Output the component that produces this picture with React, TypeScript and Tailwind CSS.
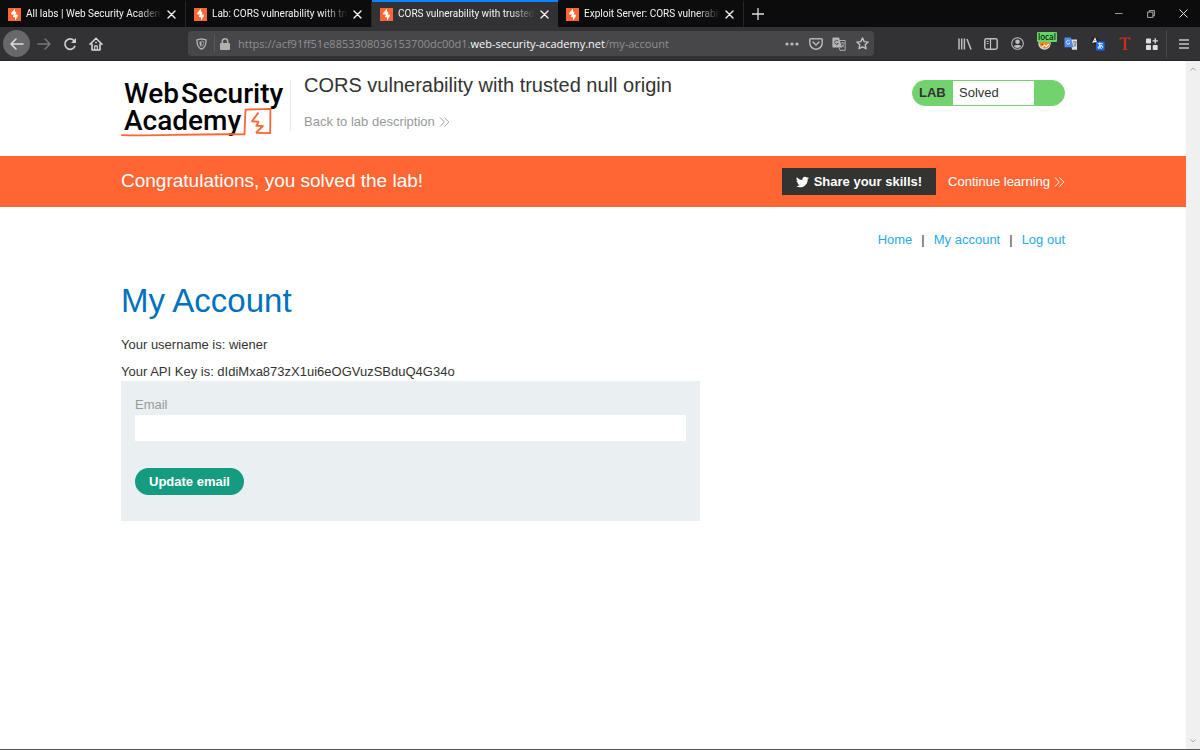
import { ReactNode } from "react";

const tabs = [
  { title: "All labs | Web Security Academy", active: false },
  { title: "Lab: CORS vulnerability with tru", active: false },
  { title: "CORS vulnerability with trusted", active: true },
  { title: "Exploit Server: CORS vulnerabili", active: false },
];

function BurpIcon() {
  return (
    <svg className="w-[13px] h-[13px] shrink-0" viewBox="0 0 13 13" aria-hidden="true">
      <rect width="13" height="13" fill="#ff6633" />
      <path
        d="M7 0.4L3 5.2L3.4 6.6H6L5 8.2L5.4 9.2H7V12.6L10 8L9.6 6.6H7.4L8.4 4.8L8 3.8H7Z"
        fill="#fff"
      />
    </svg>
  );
}

function CloseIcon() {
  return (
    <svg className="w-[9px] h-[9px]" viewBox="0 0 9 9" stroke="#f4f4f4" strokeWidth="1.4" strokeLinecap="round">
      <path d="M1 1l7 7M8 1L1 8" />
    </svg>
  );
}

function BrowserTab({ title, active }: { title: string; active: boolean }) {
  return (
    <div
      className={`flex w-[186px] min-w-0 items-center border-t-2 pl-2 pr-2 ${
        active ? "border-[#0a84ff] bg-[#323234]" : "border-[#0c0c0d] border-r border-r-[#252526]"
      }`}
    >
      <BurpIcon />
      <span className="ml-[5px] min-w-0 flex-1 overflow-hidden whitespace-nowrap pb-px text-[10px] leading-4 text-[#f5f5f5] [mask-image:linear-gradient(to_right,black_82%,transparent)]">
        {title}
      </span>
      <button aria-label={`Close ${title}`} className="ml-1 p-px">
        <CloseIcon />
      </button>
    </div>
  );
}

function ToolButton({ label, children }: { label: string; children: ReactNode }) {
  return (
    <button aria-label={label} className="flex h-[26px] w-[26px] shrink-0 items-center justify-center">
      {children}
    </button>
  );
}

function DoubleChevron() {
  return (
    <svg className="h-[10px] w-[11px]" viewBox="0 0 11 10" fill="none" stroke="currentColor" strokeWidth="0.9">
      <path d="M1 0.5L5.3 5L1 9.5M5.5 0.5L9.8 5L5.5 9.5" />
    </svg>
  );
}

function TabStrip() {
  return (
    <div className="flex h-[27px] bg-[#0c0c0d] font-['Roboto',sans-serif]">
      {tabs.map((tab) => (
        <BrowserTab key={tab.title} {...tab} />
      ))}
      <button aria-label="New tab" className="flex w-[27px] items-center justify-center">
        <svg className="h-3 w-3" viewBox="0 0 12 12" stroke="#dcdcdc" strokeWidth="1.3">
          <path d="M6 0v12M0 6h12" />
        </svg>
      </button>
      <div className="ml-auto flex">
        <button aria-label="Minimize" className="flex w-8 items-center justify-center">
          <svg className="h-2 w-2" viewBox="0 0 8 8" stroke="#999" strokeWidth="1">
            <path d="M0 3.5h7.5" />
          </svg>
        </button>
        <button aria-label="Restore" className="flex w-8 items-center justify-center">
          <svg className="h-2 w-2" viewBox="0 0 8 8" fill="none" stroke="#bbb" strokeWidth="0.9">
            <path d="M0.6 2.1h5.3v5.3H0.6zM2.2 2V0.6h5.2v5.2H6" />
          </svg>
        </button>
        <button aria-label="Close window" className="flex w-[33px] items-center justify-center">
          <svg className="h-[9px] w-[9px]" viewBox="0 0 9 9" stroke="#e5e5e5" strokeWidth="1">
            <path d="M0.5 0.5l8 8M8.5 0.5l-8 8" />
          </svg>
        </button>
      </div>
    </div>
  );
}

function Toolbar() {
  return (
    <div className="flex h-[34px] items-center border-b border-[#252526] bg-[#323234] pl-[3px] pr-[3px]">
      <button
        aria-label="Back"
        className="mr-px flex h-[27px] w-[27px] shrink-0 items-center justify-center rounded-full bg-[#68686a]"
      >
        <svg className="h-[14px] w-[14px]" viewBox="0 0 14 14" fill="none" stroke="#dedede" strokeWidth="1.5" strokeLinecap="round" strokeLinejoin="round">
          <path d="M13 7H1M6 2L1 7l5 5" />
        </svg>
      </button>
      <ToolButton label="Forward">
        <svg className="h-[14px] w-[14px]" viewBox="0 0 14 14" fill="none" stroke="#78787a" strokeWidth="1.4" strokeLinecap="round" strokeLinejoin="round">
          <path d="M1 7h12M8 2l5 5-5 5" />
        </svg>
      </ToolButton>
      <ToolButton label="Reload">
        <svg className="h-[14px] w-[14px]" viewBox="0 0 14 14" fill="none" stroke="#cfcfcf" strokeWidth="1.7" strokeLinecap="round">
          <path d="M11.8 9.4A5.2 5.2 0 1 1 10.8 3.4" />
          <path d="M13 1v5H8z" fill="#cfcfcf" stroke="none" />
        </svg>
      </ToolButton>
      <ToolButton label="Home">
        <svg className="h-[14px] w-[14px]" viewBox="0 0 14 14" fill="none" stroke="#d5d5d5" strokeWidth="1.6" strokeLinecap="round" strokeLinejoin="round">
          <path d="M1 7.2L7 1.2l6 6M3 7v6h8V7" />
          <path d="M5.7 13V8.8h2.6V13" strokeWidth="1.2" />
          <path d="M7 5.2v0.6" />
        </svg>
      </ToolButton>

      <div className="ml-[79px] flex h-[25px] min-w-0 flex-1 items-center rounded-sm bg-[#474749]">
        <ToolButton label="Tracking protection">
          <svg className="h-3 w-[11px]" viewBox="0 0 11 12" fill="none" stroke="#b5b5b6" strokeWidth="1.3">
            <path d="M5.5 0.8L10 1.8C10.2 6 9.3 9.6 5.5 11.2C1.7 9.6 0.8 6 1 1.8Z" strokeLinejoin="round" />
            <path d="M5.5 3.2V8.8C3.8 7.9 3.4 6 3.4 3.7Z" fill="#b5b5b6" stroke="none" />
            <path d="M5.5 3.2L7.6 3.7C7.6 6 7.2 7.9 5.5 8.8" strokeWidth="0.7" />
          </svg>
        </ToolButton>
        <div className="h-[17px] w-px shrink-0 bg-[#59595b]" />
        <svg className="ml-[5px] h-3 w-[10px] shrink-0" viewBox="0 0 10 12" fill="none" aria-hidden="true">
          <rect y="5" width="10" height="7" rx="1" fill="#b0b0b1" />
          <path d="M2.3 6V3.5a2.7 2.7 0 0 1 5.4 0V6" stroke="#b0b0b1" strokeWidth="1.6" />
        </svg>
        <div className="ml-2 min-w-0 flex-1 truncate pt-0.5 text-[11px] text-[#8f8f91]">
          https://acf91ff51e8853308036153700dc00d1.
          <span className="text-[#f9f9fa]">web-security-academy.net</span>
          /my-account
        </div>
        <div className="flex shrink-0">
          <button aria-label="Page actions" className="flex h-[26px] w-6 items-center justify-center">
            <svg className="h-1 w-[14px]" viewBox="0 0 14 4" fill="#bdbdbe">
              <circle cx="2" cy="2" r="1.6" />
              <circle cx="7" cy="2" r="1.6" />
              <circle cx="12" cy="2" r="1.6" />
            </svg>
          </button>
          <button aria-label="Save to Pocket" className="flex h-[26px] w-[23px] items-center justify-center">
            <svg className="h-3 w-[14px]" viewBox="0 0 14 12" fill="none" stroke="#b5b5b6" strokeWidth="1.5" strokeLinecap="round" strokeLinejoin="round">
              <path d="M1.8 0.8h10.4a1 1 0 0 1 1 1V5A6.2 6.2 0 0 1 0.8 5V1.8a1 1 0 0 1 1-1z" />
              <path d="M4 4l3 3 3-3" />
            </svg>
          </button>
          <button aria-label="Translate page" className="flex h-[26px] w-[23px] items-center justify-center">
            <svg className="h-[14px] w-[14px]" viewBox="0 0 14 14" fill="none">
              <path d="M1.2 0.5H7L10 10.5H1.2a0.8 0.8 0 0 1-0.8-0.8V1.2a0.8 0.8 0 0 1 0.8-0.7z" fill="#b5b5b6" />
              <path d="M6.3 4.2A2 2 0 1 0 6.3 6.5H4.8" stroke="#474749" strokeWidth="0.9" />
              <path d="M8 3.5h5.2v9.8H8L7 10.5" stroke="#b5b5b6" strokeWidth="0.9" />
              <path d="M9 6h3.6M10.8 5v1M12 6.5c-.5 2-1.2 3-2.4 4M9.6 7.5l2.4 3" stroke="#b5b5b6" strokeWidth="0.8" />
            </svg>
          </button>
          <button aria-label="Bookmark this page" className="flex h-[26px] w-6 items-center justify-center">
            <svg className="h-[13px] w-[13px]" viewBox="0 0 13 13" fill="none" stroke="#c2c2c3" strokeWidth="1.4" strokeLinejoin="round">
              <path d="M6.5 1l1.7 3.6 3.9.5-2.9 2.7.8 3.9-3.5-1.9L3 11.7l.8-3.9L.9 5.1l3.9-.5z" />
            </svg>
          </button>
        </div>
      </div>

      <div className="ml-[78px] flex shrink-0 items-center">
        <ToolButton label="Library">
          <svg className="h-3 w-[14px]" viewBox="0 0 14 12" stroke="#bdbdbe" strokeWidth="1.5">
            <path d="M1 0.5v11M3.7 0.5v11M6.4 0.5v11M9 1l4 10.5" />
          </svg>
        </ToolButton>
        <ToolButton label="Sidebars">
          <svg className="h-3 w-[14px]" viewBox="0 0 14 12" fill="none" stroke="#bdbdbe">
            <rect x="0.8" y="0.8" width="12.4" height="10.4" rx="1.6" strokeWidth="1.5" />
            <path d="M6.5 1v10" strokeWidth="1.2" />
            <path d="M2.6 3.5h2M2.6 5.5h2" strokeWidth="0.9" />
          </svg>
        </ToolButton>
        <ToolButton label="Account">
          <svg className="h-[13px] w-[13px]" viewBox="0 0 13 13" fill="#bdbdbe">
            <circle cx="6.5" cy="6.5" r="5.8" fill="none" stroke="#bdbdbe" strokeWidth="1.1" />
            <circle cx="6.5" cy="4.8" r="2.3" />
            <path d="M2.7 9.2C3.4 7.5 9.6 7.5 10.3 9.2A5 5 0 0 1 2.7 9.2z" />
          </svg>
        </ToolButton>
        <div className="ml-px flex gap-px">
          <div className="relative">
            <ToolButton label="Proxy: local">
              <svg className="h-[13px] w-[13px]" viewBox="0 0 13 13">
                <circle cx="6.5" cy="6.5" r="6.2" fill="#d9d4cd" />
                <path d="M1.2 5.5C1.5 1.5 11.5 1.5 12 5.5C12.2 9 9.5 11.6 7.5 11.2C6 12 2 10.5 1.2 5.5z" fill="#ed8a25" />
                <path d="M4 10.4L6.2 8l2 1.6L10.8 7" stroke="#fff" strokeWidth="1.1" fill="none" />
                <path d="M3.5 7l1.8 1" stroke="#7b3b12" strokeWidth="1" />
              </svg>
            </ToolButton>
            <span className="pointer-events-none absolute left-[6px] top-px rounded-[1px] bg-[#63d668] px-px font-['Open_Sans',sans-serif] text-[8px] font-semibold leading-[10px] text-[#0b2a0c]">
              local
            </span>
          </div>
          <ToolButton label="Google Translate">
            <svg className="h-[13px] w-[14px]" viewBox="0 0 14 13" fill="none">
              <path d="M6.5 2.5H13v10.2H8z" fill="#dededf" />
              <path d="M0.5 0.5h6.3l2.8 9.8H0.5z" fill="#4f8bf0" />
              <path d="M5.8 4.2A1.9 1.9 0 1 0 5.9 6.2H4.5" stroke="#dce8ff" strokeWidth="0.9" />
              <path d="M9 5h3.6M10.8 4v1M12 5.5c-.3 1.8-1 3-2 4M10 6.5l2 3" stroke="#666" strokeWidth="0.8" />
            </svg>
          </ToolButton>
          <ToolButton label="Translate selection">
            <svg className="h-[14px] w-[14px]" viewBox="0 0 14 14" fill="none">
              <path d="M0.5 0.5h6l3 7h-9z" fill="#242426" />
              <path d="M1.7 6L4 1.5 5.8 6M2.4 4.6h2.8" stroke="#f5f5f5" strokeWidth="1.1" />
              <rect x="5" y="4.5" width="8.6" height="9" rx="1" fill="#1769e0" />
              <path d="M6.8 6.7h4.8M8.8 5.4c-.3 2.5 0 4.5.5 6M11 7.6c-.5 2-2 3.7-3.6 3.7-1-1 .7-3 3-2.7 2 .3 1.6 2.7-.2 3" stroke="#fff" strokeWidth="0.9" />
            </svg>
          </ToolButton>
          <ToolButton label="Text tool">
            <svg className="h-[13px] w-3" viewBox="0 0 12 13" fill="#c9301a">
              <path d="M0.8 0.4h10.4l0.4 3h-0.7C10.3 1.7 9.3 1.3 7.2 1.3v10.2c0 .6.4.8 1.4.9v.5H3.4v-.5c1-.1 1.4-.3 1.4-.9V1.3c-2.1 0-3.1.4-3.7 2.1H0.4z" />
            </svg>
          </ToolButton>
          <ToolButton label="Add-ons">
            <svg className="h-3 w-3" viewBox="0 0 12 12" fill="#dedede">
              <rect y="0.5" width="5" height="5" rx="0.8" />
              <rect y="7" width="5" height="5" rx="0.8" />
              <rect x="6.7" y="7" width="5" height="5" rx="0.8" />
              <path d="M8.6 0.3h1.3v2h2v1.3h-2v2H8.6v-2h-2V2.3h2z" />
            </svg>
          </ToolButton>
        </div>
        <div className="mr-1 ml-px h-7 w-px bg-[#48484a]" />
        <ToolButton label="Menu">
          <svg className="h-[10px] w-[10px]" viewBox="0 0 10 10" stroke="#c4c4c5" strokeWidth="1.4">
            <path d="M0 1h10M0 5h10M0 9h10" />
          </svg>
        </ToolButton>
      </div>
    </div>
  );
}

function AcademyLogo() {
  return (
    <svg className="h-[62px] w-[166px] shrink-0" viewBox="0 0 166 62" role="img" aria-label="Web Security Academy">
      <g className="font-['Roboto',sans-serif] text-[28px] font-medium" fill="#000">
        <text x="3" y="28">Web</text>
        <text x="60" y="28">Security</text>
        <text x="3" y="55">Academy</text>
      </g>
      <g fill="none" stroke="#ff6633" strokeLinecap="round" strokeLinejoin="round">
        <path d="M1 60.2C30 61.2 75 58.6 123.5 59.4L124.5 34.6L149.4 33.8L149.2 58.2L136 57.8" strokeWidth="1.8" />
        <path d="M137 38.3L131 46.2L137.4 46.8L135.4 50.8L141.8 51L135.5 57.4" strokeWidth="1.9" />
      </g>
    </svg>
  );
}

function LabHeader() {
  return (
    <header className="mx-auto flex h-[95px] w-full max-w-[944px] items-start pt-[14px]">
      <a href="#academy">
        <AcademyLogo />
      </a>
      <div className="ml-[3px] mt-[5px] h-[51px] border-l border-[#e8e8e8] pl-[13px]">
        <h2 className="-mt-[7px] text-[20px] leading-6 text-[#333332]">
          CORS vulnerability with trusted null origin
        </h2>
        <a href="#description" className="mt-[17px] flex items-center gap-1 text-[13px] leading-4 text-[#999]">
          Back to lab description
          <DoubleChevron />
        </a>
      </div>
      <div className="ml-auto mt-[5px] flex h-[26px] w-[153px] shrink-0 overflow-hidden rounded-full border border-[#72d36e] bg-[#72d36e] text-[13px] leading-6 text-[#333332]">
        <span className="w-10 pl-1.5 font-bold">LAB</span>
        <p className="w-[81px] bg-white pl-1.5">Solved</p>
      </div>
    </header>
  );
}

function SolvedBanner() {
  return (
    <section className="bg-[#ff6633] text-white">
      <div className="mx-auto flex h-[51px] w-full max-w-[944px] items-center">
        <h4 className="text-[19px]">Congratulations, you solved the lab!</h4>
        <button className="ml-auto flex h-[27px] items-center gap-[5px] bg-[#333332] px-[14px] text-[13px] font-bold">
          <svg className="h-3 w-[13px]" viewBox="0 0 24 20" fill="#fff" aria-hidden="true">
            <path d="M23.95 2.57a10 10 0 0 1-2.82.77 4.96 4.96 0 0 0 2.16-2.72 9.9 9.9 0 0 1-3.12 1.19 4.92 4.92 0 0 0-8.38 4.48C7.69 6.1 4.07 4.13 1.64 1.16a4.92 4.92 0 0 0 1.52 6.57 4.9 4.9 0 0 1-2.23-.61v.06c0 2.38 1.7 4.37 3.95 4.82a5 5 0 0 1-2.21.09 4.94 4.94 0 0 0 4.6 3.42A9.87 9.87 0 0 1 0 17.54a13.99 13.99 0 0 0 7.55 2.21c9.05 0 14-7.5 14-13.99l-.02-.63a9.93 9.93 0 0 0 2.42-2.56z" />
          </svg>
          Share your skills!
        </button>
        <a href="#learning" className="ml-3 flex items-center gap-1 text-[13px]">
          Continue learning
          <DoubleChevron />
        </a>
      </div>
    </section>
  );
}

function AccountPage() {
  return (
    <main className="mx-auto w-full max-w-[944px] pt-6 text-[13px] leading-[18px] text-[#333332]">
      <nav className="flex justify-end gap-[9px]">
        <a href="#home" className="text-[#29abe2]">Home</a>
        <span>|</span>
        <a href="#my-account" className="text-[#29abe2]">My account</a>
        <span>|</span>
        <a href="#logout" className="text-[#29abe2]">Log out</a>
      </nav>
      <h1 className="mt-8 text-[33px] leading-10 text-[#0071bc]">My Account</h1>
      <p className="mt-[15px]">Your username is: wiener</p>
      <p className="mt-[9px]">Your API Key is: dIdiMxa873zX1ui6eOGVuzSBduQ4G34o</p>
      <form className="max-w-[579px] bg-[#eaeff2] px-[14px] pb-[26px] pt-[15px]">
        <label htmlFor="email" className="block text-[#999]">Email</label>
        <input
          id="email"
          type="email"
          name="email"
          className="mt-px block h-[26px] w-full bg-white px-2 outline-none"
        />
        <button
          type="button"
          className="mt-[27px] h-[27px] rounded-full bg-[#159b80] px-[14px] font-bold text-white"
        >
          Update email
        </button>
      </form>
    </main>
  );
}

export default function App() {
  return (
    <div className="flex min-h-screen flex-col border-b border-[#555] bg-white font-['Liberation_Sans',Arial,sans-serif]">
      <div className="font-['Open_Sans',sans-serif]">
        <TabStrip />
        <Toolbar />
      </div>
      <div className="flex flex-1">
        <div className="min-w-0 flex-1">
          <LabHeader />
          <SolvedBanner />
          <AccountPage />
        </div>
        {/* Scrollbar track */}
        <div className="flex w-[14px] shrink-0 flex-col items-center justify-between bg-[#f0f0f0] py-1.5">
          <svg className="h-1 w-[6px]" viewBox="0 0 6 4" fill="none" stroke="#a9a9a9">
            <path d="M0.5 3.5L3 1l2.5 2.5" />
          </svg>
          <svg className="h-1 w-[6px]" viewBox="0 0 6 4" fill="none" stroke="#a9a9a9">
            <path d="M0.5 0.5L3 3l2.5-2.5" />
          </svg>
        </div>
      </div>
    </div>
  );
}
